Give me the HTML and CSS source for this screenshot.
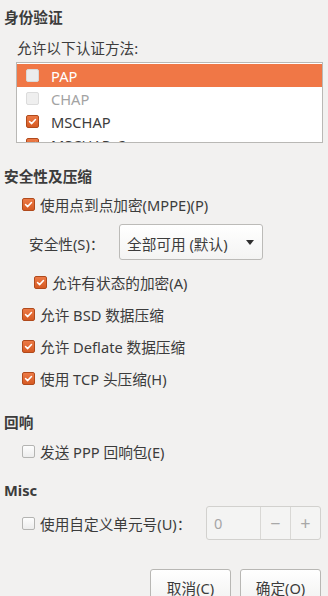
FILE: index.html
```html
<!DOCTYPE html>
<html lang="zh-CN">
<head>
<meta charset="utf-8">
<title>PPP 设置</title>
<link rel="stylesheet" href="styles.css">
</head>
<body>
<div class="dialog">
  <div class="title t-auth">身份验证</div>
  <div class="label-row">允许以下认证方法:</div>
  <div class="listbox">
    <div class="item selected"><span class="cb"></span><span>PAP</span></div>
    <div class="item disabled"><span class="cb"></span><span>CHAP</span></div>
    <div class="item"><span class="cb checked"><svg viewBox="0 0 13 13"><path d="M3 6.6 L5.4 9 L10 4.2"/></svg></span><span>MSCHAP</span></div>
    <div class="item"><span class="cb checked"><svg viewBox="0 0 13 13"><path d="M3 6.6 L5.4 9 L10 4.2"/></svg></span><span>MSCHAPv2</span></div>
  </div>

  <div class="title t-sec">安全性及压缩</div>
  <div class="row r-mppe"><span class="cb checked"><svg viewBox="0 0 13 13"><path d="M3 6.6 L5.4 9 L10 4.2"/></svg></span><span>使用点到点加密(MPPE)(P)</span></div>
  <div class="sec-row">
    <span class="sec-label">安全性(S)：</span>
    <div class="combo"><span>全部可用 (默认)</span><span class="arrow"></span></div>
  </div>
  <div class="row r-state"><span class="cb checked"><svg viewBox="0 0 13 13"><path d="M3 6.6 L5.4 9 L10 4.2"/></svg></span><span>允许有状态的加密(A)</span></div>
  <div class="row"><span class="cb checked"><svg viewBox="0 0 13 13"><path d="M3 6.6 L5.4 9 L10 4.2"/></svg></span><span>允许 BSD 数据压缩</span></div>
  <div class="row"><span class="cb checked"><svg viewBox="0 0 13 13"><path d="M3 6.6 L5.4 9 L10 4.2"/></svg></span><span>允许 Deflate 数据压缩</span></div>
  <div class="row"><span class="cb checked"><svg viewBox="0 0 13 13"><path d="M3 6.6 L5.4 9 L10 4.2"/></svg></span><span>使用 TCP 头压缩(H)</span></div>

  <div class="title t-echo">回响</div>
  <div class="row r-echo"><span class="cb"></span><span>发送 PPP 回响包(E)</span></div>

  <div class="title t-misc">Misc</div>
  <div class="unit-row">
    <div class="unit-left"><span class="cb"></span><span>使用自定义单元号(U)：</span></div>
    <div class="spin">
      <span class="spin-entry">0</span>
      <span class="spin-btn">−</span>
      <span class="spin-btn">+</span>
    </div>
  </div>

  <div class="actions">
    <button class="btn">取消(C)</button>
    <button class="btn">确定(O)</button>
  </div>
</div>
</body>
</html>
```

FILE: styles.css
```css
html, body {
  margin: 0;
  padding: 0;
  background: #f2f1f0;
}
body {
  font-family: "Noto Sans", "Noto Sans CJK SC", sans-serif;
  font-size: 14.67px;
  color: #3c3c3c;
  width: 328px;
  height: 596px;
  overflow: hidden;
}
.dialog {
  padding: 0 5px 0 4px;
}
.title {
  font-weight: 700;
  height: 30px;
  display: flex;
  align-items: center;
}
.t-auth { height: 32px; }
.t-sec { margin-top: 17px; }
.t-echo { margin-top: 12px; }
.t-misc { margin-top: 9px; }

.label-row {
  height: 30px;
  display: flex;
  align-items: center;
  padding-left: 13px;
}

.listbox {
  margin-left: 12px;
  height: 81px;
  box-sizing: border-box;
  border: 1px solid #b9b8b5;
  background: #ffffff;
  overflow: hidden;
  padding-top: 1px;
}
.item {
  height: 23px;
  display: flex;
  align-items: center;
  padding-left: 9px;
  gap: 12px;
}
.item.selected {
  background: #f07746;
  color: #ffffff;
}
.item.disabled {
  color: #a3a3a3;
}
.item.disabled .cb {
  background: #efefef;
  border-color: #dcdcdc;
}
.item.selected .cb {
  background: #ececec;
  border-color: #d9d9d9;
}

.cb {
  width: 13px;
  height: 13px;
  box-sizing: border-box;
  border: 1px solid #b4b4b2;
  border-radius: 2px;
  background: linear-gradient(#fdfdfd, #ededed);
  flex: none;
  display: inline-flex;
}
.cb.checked {
  border-color: #b04a1c;
  background: linear-gradient(#ec7a46, #d65a23);
}
.cb svg {
  width: 11px;
  height: 11px;
  margin: 0;
}
.cb svg path {
  fill: none;
  stroke: #ffffff;
  stroke-width: 1.8;
  stroke-linecap: round;
  stroke-linejoin: round;
}

.row {
  height: 32px;
  display: flex;
  align-items: center;
  padding-left: 18px;
  gap: 5px;
}
.r-mppe { height: 28px; }
.r-state { padding-left: 30px; }
.r-echo { height: 30px; }

.sec-row {
  height: 48px;
  display: flex;
  align-items: center;
  padding-left: 25px;
}
.sec-label {
  width: 90px;
  flex: none;
  padding-top: 3px;
}
.combo {
  width: 144px;
  height: 36px;
  box-sizing: border-box;
  border: 1px solid #bcbbb8;
  border-radius: 3px;
  background: linear-gradient(#ffffff, #f4f4f3);
  display: flex;
  align-items: center;
  justify-content: space-between;
  padding: 2px 8px 0 7px;
}
.arrow {
  width: 0;
  height: 0;
  border-left: 4.5px solid transparent;
  border-right: 4.5px solid transparent;
  border-top: 5px solid #2f2f2f;
  margin-bottom: 2px;
}

.unit-row {
  height: 35px;
  display: flex;
  align-items: center;
  justify-content: space-between;
  padding-left: 18px;
  padding-right: 2px;
}
.unit-left {
  display: flex;
  align-items: center;
  gap: 5px;
  padding-top: 2px;
}
.spin {
  width: 115px;
  height: 34px;
  box-sizing: border-box;
  border: 1px solid #d2d1ce;
  border-radius: 3px;
  background: #f4f4f3;
  display: flex;
  overflow: hidden;
}
.spin-entry {
  flex: 1;
  display: flex;
  align-items: center;
  padding-left: 7px;
  color: #a6a6a6;
}
.spin-btn {
  width: 29px;
  border-left: 1px solid #d9d8d5;
  display: flex;
  align-items: center;
  justify-content: center;
  color: #a8a8a8;
  font-size: 18px;
  line-height: 1;
}

.actions {
  margin-top: 29px;
  display: flex;
  justify-content: flex-end;
  gap: 9px;
  padding-right: 2px;
}
.btn {
  width: 81px;
  height: 36px;
  box-sizing: border-box;
  border: 1px solid #b8b7b4;
  border-radius: 3px;
  background: linear-gradient(#ffffff, #f1f1f0);
  font-family: "Noto Sans", "Noto Sans CJK SC", sans-serif;
  font-size: 14.67px;
  color: #3c3c3c;
  padding: 0;
}
```
